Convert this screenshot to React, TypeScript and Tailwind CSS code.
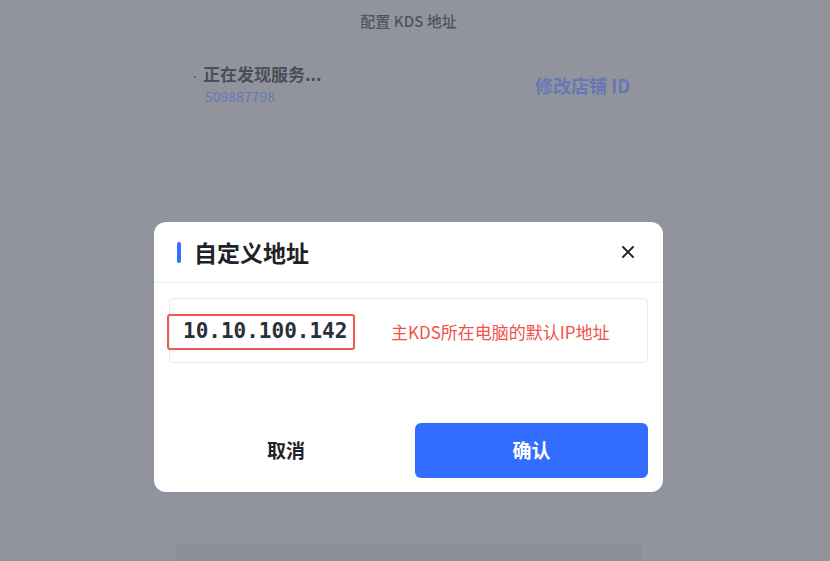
import { X } from 'lucide-react'

const cjk = { fontFamily: '"Noto Sans CJK SC", "Noto Sans", sans-serif' }

function BackgroundPage() {
  return (
    <div className="flex flex-col items-start pl-[176px] h-[561px] bg-[#91949d]" style={cjk}>
      <div className="w-[465px] flex flex-col">
        <div className="h-[43px] flex items-center justify-center border-b border-[#8c9098] text-[15px] font-medium text-[#50535b]">
          配置 KDS 地址
        </div>
        <div className="flex items-center justify-between pl-[18px] pr-[11px] pt-[18px]">
          <div className="flex flex-col">
            <div className="flex items-center gap-[7px]">
              <span className="w-[2px] h-[2px] rounded-full bg-[#5a5d65] mt-[6px]" />
              <span className="text-[17px] font-bold text-[#4b4e55] leading-[26px]">正在发现服务...</span>
            </div>
            <span className="pl-[11px] text-[14px] text-[#6677b5] leading-[18px]">509887798</span>
          </div>
          <span className="mt-[4px] text-[18px] font-bold text-[#6677b5]">修改店铺 ID</span>
        </div>
      </div>
      <div className="mt-auto w-[465px] h-[18px] bg-[#8c8f98]" />
    </div>
  )
}

function AddressDialog() {
  return (
    <div className="w-[509px] h-[270px] bg-white rounded-[12px] flex flex-col" style={cjk}>
      <div className="h-[61px] flex items-center justify-between pl-[23px] pr-[25px] border-b border-[#e9edf4]">
        <div className="flex items-center gap-[13px]">
          <span className="w-[4px] h-[21px] rounded-full bg-[#3370ff]" />
          <span className="text-[23px] font-bold text-[#1f2329] leading-none">自定义地址</span>
        </div>
        <X size={20} strokeWidth={2.2} className="text-[#1f2329]" />
      </div>
      <div className="px-[15px] pt-[15px]">
        <div className="h-[65px] border border-[#e6eaf2] rounded-[4px] flex items-center">
          <div className="ml-[-3px] mt-[2px] w-[188px] h-[36px] border-2 border-[#ee5a4f] rounded-[3px] flex items-center pl-[14px]">
            <span
              className="text-[21px] font-bold text-[#2b2f36] leading-none"
              style={{ fontFamily: '"DejaVu Sans Mono", monospace' }}
            >
              10.10.100.142
            </span>
          </div>
          <span className="ml-[36px] mt-[2px] text-[17px] text-[#f0524a]">主KDS所在电脑的默认IP地址</span>
        </div>
      </div>
      <div className="mt-auto mb-[14px] flex items-center px-[15px] gap-[12px]">
        <button className="flex-1 h-[55px] text-[19px] font-bold text-[#1f2329]">取消</button>
        <button className="w-[233px] h-[55px] rounded-[6px] bg-[#336dff] text-[19px] font-bold text-white">
          确认
        </button>
      </div>
    </div>
  )
}

export default function App() {
  return (
    <div className="relative w-[830px] h-[561px] overflow-hidden">
      <BackgroundPage />
      <div className="absolute inset-0 pt-[222px] pl-[154px]">
        <AddressDialog />
      </div>
    </div>
  )
}
